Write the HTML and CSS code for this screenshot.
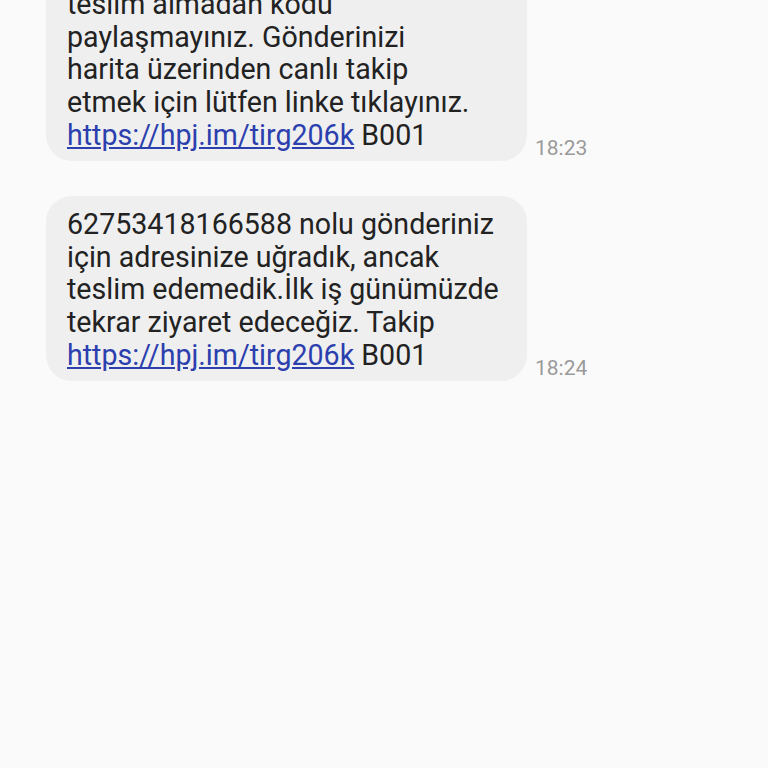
FILE: index.html
```html
<!DOCTYPE html>
<html lang="tr">
<head>
  <meta charset="UTF-8" />
  <title>Mesajlar</title>
  <meta name="viewport" content="width=device-width, initial-scale=1.0" />
  <link rel="stylesheet" href="styles.css">
</head>
<body>

<div class="thread">
  <div class="msg-row">
    <div class="bubble">
      Teslimat kodunuz: 482913.<br>
      Lütfen kuryemize ürünü<br>
      teslim almadan kodu<br>
      paylaşmayınız. Gönderinizi<br>
      harita üzerinden canlı takip<br>
      etmek için lütfen linke tıklayınız.<br>
      <a href="#">https://hpj.im/tirg206k</a> B001
    </div>
    <span class="time">18:23</span>
  </div>

  <div class="msg-row">
    <div class="bubble">
      62753418166588 nolu gönderiniz için adresinize uğradık, ancak teslim
      edemedik.İlk iş günümüzde tekrar ziyaret edeceğiz. Takip
      <a href="#">https://hpj.im/tirg206k</a> B001
    </div>
    <span class="time">18:24</span>
  </div>
</div>

</body>
</html>
```

FILE: styles.css
```css
body {
  margin: 0;
  font-family: Roboto, 'Noto Sans', sans-serif;
  background-color: #fafafa;
  color: #222;
}
.thread {
  display: flex;
  flex-direction: column;
  gap: 35px;
  padding: 0 46px;
  margin-top: -89px;
}
.msg-row {
  display: flex;
  align-items: flex-end;
}
.bubble {
  width: 439px;
  padding: 12px 21px 10px;
  background-color: #efefef;
  border-radius: 26px;
  font-size: 28.6px;
  line-height: 32.6px;
}
.bubble a {
  color: #2c3fae;
  text-decoration: underline;
}
.time {
  margin-left: 8px;
  margin-bottom: 1px;
  font-size: 21px;
  color: #9a9a9a;
}
```
